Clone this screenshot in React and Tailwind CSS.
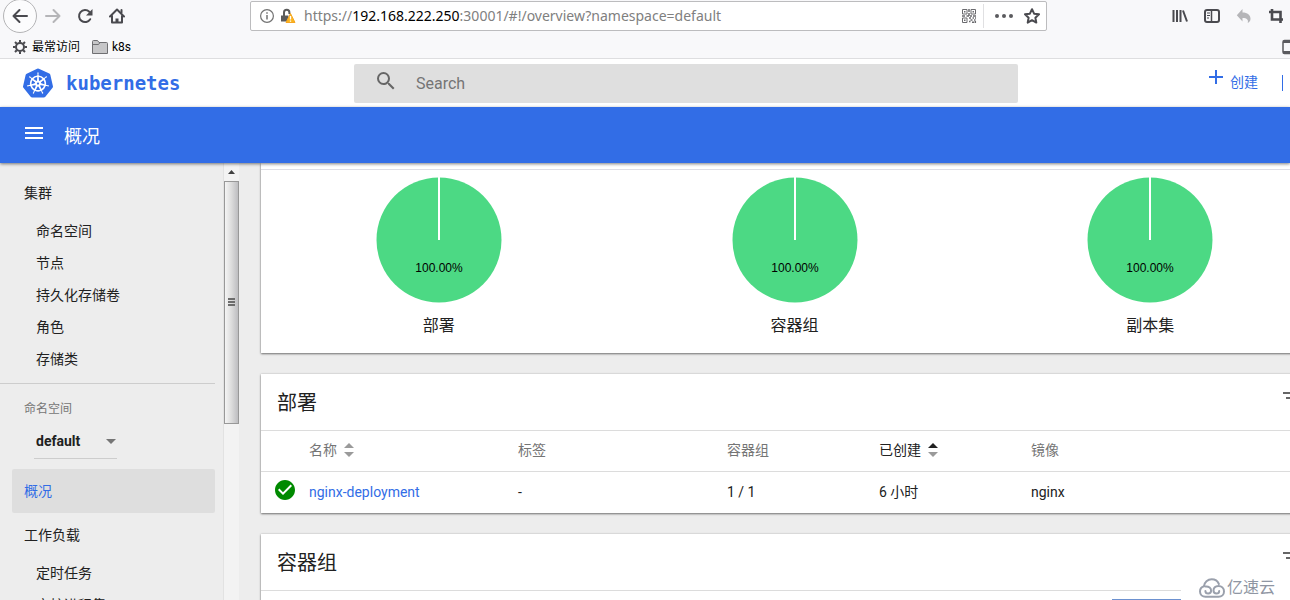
import React from 'react';
import { MdAdd, MdArrowDropDown, MdCheckCircle, MdFilterList, MdMenu, MdSearch } from 'react-icons/md';
import { SiKubernetes } from 'react-icons/si';

const clusterItems = ['命名空间', '节点', '持久化存储卷', '角色', '存储类'];
const workloadItems = ['定时任务', '守护进程集'];

const charts = [
  { label: '部署', value: '100.00%' },
  { label: '容器组', value: '100.00%' },
  { label: '副本集', value: '100.00%' },
];

const columns = [
  { title: '名称', width: 'w-[209px]', sortable: true },
  { title: '标签', width: 'w-[209px]' },
  { title: '容器组', width: 'w-[152px]' },
  { title: '已创建', width: 'w-[152px]', sortable: true, active: true },
  { title: '镜像', width: '' },
];

const deployments = [
  { name: 'nginx-deployment', labels: '-', pods: '1 / 1', age: '6 小时', image: 'nginx' },
];

const BackIcon = () => (
  <svg width="16" height="16" viewBox="0 0 16 16" fill="none" stroke="currentColor" strokeWidth="2" strokeLinecap="round" strokeLinejoin="round">
    <path d="M15 8H1.500M7.500 2L1.500 8l6 6" />
  </svg>
);

const ForwardIcon = () => (
  <svg width="16" height="16" viewBox="0 0 16 16" fill="none" stroke="currentColor" strokeWidth="2" strokeLinecap="round" strokeLinejoin="round">
    <path d="M1 8h13.500M8.500 2l6 6-6 6" />
  </svg>
);

const ReloadIcon = () => (
  <svg width="16" height="16" viewBox="0 0 16 16" fill="none">
    <path d="M13.200 11.200A6 6 0 1 1 12.300 3.800" stroke="currentColor" strokeWidth="2" strokeLinecap="round" />
    <path d="M15.500 1v6.500H9z" fill="currentColor" />
  </svg>
);

const HomeIcon = () => (
  <svg width="16" height="16" viewBox="0 0 16 16" fill="none" stroke="currentColor" strokeWidth="2" strokeLinecap="round" strokeLinejoin="round">
    <path d="M1 8.500L8 1.500l7 7" />
    <path d="M3 8v6.500h10V8" />
    <path d="M8 14v-3.500" strokeWidth="3" strokeLinecap="butt" />
    <path d="M12.500 2v2.500" />
  </svg>
);

const GearIcon = () => (
  <svg width="14" height="14" viewBox="0 0 14 14" fill="none" stroke="currentColor">
    <circle cx="7" cy="7" r="4" strokeWidth="2" />
    <path
      d="M7 0v2.500M7 11.500V14M0 7h2.500M11.500 7H14M2 2l1.800 1.800M10.200 10.200L12 12M2 12l1.800-1.800M10.200 3.800L12 2"
      strokeWidth="2"
    />
  </svg>
);

const FolderIcon = () => (
  <svg width="16" height="14" viewBox="0 0 16 14">
    <path d="M.5 13.500V1.500a1 1 0 0 1 1-1h4l1.500 2h7.500a1 1 0 0 1 1 1v10z" fill="#c6c6c8" stroke="#6f6f72" />
    <path d="M.5 4.500h6l1.500-2" fill="none" stroke="#6f6f72" />
  </svg>
);

const InfoIcon = () => (
  <svg width="14" height="14" viewBox="0 0 14 14" fill="none" stroke="#737373">
    <circle cx="7" cy="7" r="6.400" strokeWidth="1.200" />
    <path d="M7 6v4.500M7 3.200v1.500" strokeWidth="1.500" />
  </svg>
);

const InsecureIcon = () => (
  <svg width="16" height="16" viewBox="0 0 16 16">
    <path d="M4 8.500V4.500a2.700 2.700 0 0 1 5.400 0v1.500" fill="none" stroke="#5a5a5a" strokeWidth="2" />
    <path d="M1 7.500h7.500v6H1z" fill="#5a5a5a" />
    <path d="M10.500 5.500L15 14.500H6z" fill="#fbb41c" stroke="#f5a623" strokeWidth="1" strokeLinejoin="round" />
    <path d="M10.500 8v3.500M10.500 12.500v1.300" stroke="#fff" strokeWidth="1.300" />
  </svg>
);

const QrIcon = () => (
  <svg width="16" height="16" viewBox="0 0 16 16" fill="none" stroke="#6b6b6f">
    <path d="M1.500 1.500h4.500V6H1.500zM10 1.500h4.500V6H10zM1.500 10h4.500v4.500H1.500z" />
    <path d="M3 3.800h1.500M11.500 3.800H13M3 12.300h1.500M8 1v3M8 5v3M1 8h3M5.500 8H8M9 8h2M12 8h3" strokeWidth="1.500" />
    <path d="M8 10h2M11.500 10h1.500M14 10h1M9.500 12h2M13 12h1.500M8 13.500h1.500M11 14.300h2M14.300 13v2" strokeWidth="1.500" />
  </svg>
);

const StarIcon = () => (
  <svg width="16" height="16" viewBox="0 0 16 16" fill="none" stroke="currentColor" strokeWidth="2" strokeLinejoin="round">
    <path d="M8 1.200l2.100 4.500 4.900.6-3.600 3.400.9 4.900L8 12.200l-4.300 2.400.9-4.900L1 6.300l4.900-.6z" />
  </svg>
);

const LibraryIcon = () => (
  <svg width="16" height="16" viewBox="0 0 16 16" fill="none" stroke="currentColor" strokeWidth="2">
    <path d="M1.500 2v12M5 2v12M8.500 2v12M11 2.500L15 13.500" />
  </svg>
);

const SidebarIcon = () => (
  <svg width="16" height="16" viewBox="0 0 16 16" fill="none" stroke="currentColor">
    <rect x="1" y="2" width="14" height="12" rx="2" strokeWidth="2" />
    <path d="M7.500 2v12" strokeWidth="1.500" />
    <path d="M3 5h3M3 7.500h3M3 10h2" />
  </svg>
);

const UndoIcon = () => (
  <svg width="16" height="16" viewBox="0 0 16 16" fill="currentColor">
    <path d="M6.500 1v3.500c5 0 8 2.500 8 6.300 0 2-1 3.400-2.800 4.200 1-3-.6-5-5.200-5v3.500L.8 7.200z" />
  </svg>
);

const CropIcon = () => (
  <svg width="16" height="16" viewBox="0 0 16 16" fill="none" stroke="currentColor" strokeWidth="2.600">
    <path d="M4 1v10.500h11M1 4h11.500v11" />
  </svg>
);

const PhoneIcon = () => (
  <svg width="12" height="16" viewBox="0 0 12 16" fill="none" stroke="#5a5a5e">
    <rect x="1" y="1.500" width="10" height="13" rx="1.500" strokeWidth="1.500" />
    <path d="M1 3h10M1 13h10" strokeWidth="2" />
  </svg>
);

const SortIcon = ({ active }) => (
  <svg width="10" height="14" viewBox="0 0 10 14">
    <path d="M5 0l5 5H0z" fill={active ? '#212121' : '#9a9a9a'} />
    <path d="M5 14l5-5H0z" fill="#9a9a9a" />
  </svg>
);

const CloudIcon = () => (
  <svg width="26" height="20" viewBox="0 0 26 20" fill="none" stroke="#9aa0ac" strokeWidth="2" strokeLinecap="round">
    {/* outline of the cloud, then the two curls inside it */}
    <path d="M5 8.300C5.300 4.300 8.700 1.300 12.700 1.300c3.300 0 6 1.800 7.200 4.700" />
    <path d="M5 8.300C2.600 9 1 11 1 13.500c0 3 2.400 5.200 5.500 5.200h13c3.200 0 5.500-2.300 5.500-5.300 0-3.200-2.500-5.500-5.500-5.500-3.300 0-5 2.200-5 4.600 0 1.800 1.400 3 3 3s2.700-1.100 2.700-2.500" />
    <path d="M6.500 8.500c3.600-.3 5.600 1.800 5.600 4 0 1.800-1.300 3-2.900 3s-2.800-1.100-2.800-2.500" />
  </svg>
);

const BrowserChrome = () => (
  <header className="shrink-0 border-b border-[#dedee0] bg-[#f8f8fa] text-[#4a4a4f]">
    <div className="flex h-8 items-center">
      <div className="flex w-[250px] shrink-0 items-center">
        <button aria-label="后退" className="ml-[3px] flex size-[34px] shrink-0 items-center justify-center rounded-full border border-[#b4b4b6] bg-[#fcfcfd]">
          <BackIcon />
        </button>
        <button aria-label="前进" className="ml-2 text-[#b5b5b8]"><ForwardIcon /></button>
        <button aria-label="刷新" className="ml-4"><ReloadIcon /></button>
        <button aria-label="主页" className="ml-4"><HomeIcon /></button>
      </div>
      <div className="flex h-[30px] min-w-0 flex-1 items-center rounded-xs border border-[#bcbcbe] bg-white pr-1.5 pl-[9px]">
        <InfoIcon />
        <span className="ml-1.5"><InsecureIcon /></span>
        <div
          role="textbox"
          aria-label="网址"
          contentEditable
          suppressContentEditableWarning
          className="ml-2 min-w-0 flex-1 truncate font-['Noto_Sans',sans-serif] text-sm text-[#808080] outline-none"
        >
          https://<span className="text-black">192.168.222.250</span>:30001/#!/overview?namespace=default
        </div>
        <button aria-label="二维码"><QrIcon /></button>
        <span className="mx-1.5 h-6 w-px bg-[#e0e0e2]" />
        <button aria-label="页面操作" className="ml-1 flex w-5 items-center justify-center gap-[3px]">
          <i className="size-1 rounded-full bg-[#5a5a5e]" />
          <i className="size-1 rounded-full bg-[#5a5a5e]" />
          <i className="size-1 rounded-full bg-[#5a5a5e]" />
        </button>
        <button aria-label="收藏" className="ml-2.5"><StarIcon /></button>
      </div>
      <div className="flex w-[243px] shrink-0 items-center justify-end gap-4 pr-1.5">
        <button aria-label="书库"><LibraryIcon /></button>
        <button aria-label="侧栏"><SidebarIcon /></button>
        <button aria-label="撤销" className="text-[#b5b5b8]"><UndoIcon /></button>
        <button aria-label="截图"><CropIcon /></button>
      </div>
    </div>
    <div className="flex h-[26px] items-center overflow-hidden pt-[3px] pl-[13px] text-xs text-black">
      <button className="flex items-center gap-[5px]"><span className="text-[#4a4a4f]"><GearIcon /></span>最常访问</button>
      <button className="ml-3 flex items-center gap-1"><FolderIcon />k8s</button>
      <button aria-label="移动设备" className="-mr-1 ml-auto"><PhoneIcon /></button>
    </div>
  </header>
);

const AppHeader = () => (
  <div className="flex h-12 shrink-0 items-center bg-white">
    <a href="#overview" className="flex w-[354px] shrink-0 items-center gap-[13px] pl-[23px] text-[#326de6]">
      <SiKubernetes size={30} />
      <span className="font-['DejaVu_Sans_Mono',monospace] text-[19px] font-bold">kubernetes</span>
    </a>
    <label className="flex h-[39px] flex-1 items-center rounded-xs bg-[#dfdfdf] pl-5">
      <MdSearch size={24} className="mb-1 text-[#666]" />
      <input aria-label="Search" placeholder="Search" className="ml-[18px] flex-1 pt-0.5 text-base outline-none placeholder:text-[#757575]" />
    </label>
    <div className="flex w-[272px] shrink-0 items-center justify-end text-[#326de6]">
      <button className="flex items-center gap-0.5 pb-0.5 text-sm">
        <MdAdd size={24} className="mb-2.5" />
        创建
      </button>
      <span className="mr-[7px] ml-6 h-4 w-px bg-[#326de6]" />
    </div>
  </div>
);

const NavSection = ({ title, items }) => (
  <>
    <a href="#section" className="ml-3 flex h-11 items-center pl-3">{title}</a>
    {items.map((item) => (
      <a key={item} href="#item" className="ml-6 flex h-8 items-center pl-3">{item}</a>
    ))}
  </>
);

const Scrollbar = () => (
  <div className="flex w-[15px] shrink-0 flex-col bg-[#f3f3f3]">
    <div className="flex h-[18px] items-center justify-center">
      <svg width="7" height="4" viewBox="0 0 7 4"><path d="M3.500 0L7 4H0z" fill="#404040" /></svg>
    </div>
    <div className="flex h-[243px] flex-col items-center justify-center gap-px border border-[#989898] bg-linear-to-r from-[#f4f4f4] via-[#dcdcdc] to-[#bdbdc0] pb-0.5">
      <i className="h-0.5 w-[7px] bg-[#6c6c6c]" />
      <i className="h-0.5 w-[7px] bg-[#6c6c6c]" />
      <i className="h-0.5 w-[7px] bg-[#6c6c6c]" />
    </div>
  </div>
);

const Sidebar = () => (
  <nav className="w-[224px] shrink-0 overflow-hidden border-r border-[#e2e2e2] pt-2 pr-2 text-sm">
    <NavSection title="集群" items={clusterItems} />
    <div className="mt-2 border-t border-[#cdcdcd] pt-[13px]">
      <label htmlFor="namespace" className="block pl-6 text-xs leading-6 text-[#757575]">命名空间</label>
      <div className="relative mt-[3px] mb-2.5 ml-[34px] flex h-[35px] w-[83px] items-center border-b border-[#cdcdcd]">
        <select id="namespace" className="w-full appearance-none pl-0.5 text-sm font-bold outline-none">
          <option>default</option>
        </select>
        <MdArrowDropDown size={24} className="pointer-events-none absolute -right-1.5 text-[#757575]" />
      </div>
    </div>
    <a href="#overview" className="ml-3 flex h-11 items-center rounded-xs bg-[#dedede] pl-3 text-[#326de6]">概况</a>
    <NavSection title="工作负载" items={workloadItems} />
  </nav>
);

const Pie = ({ label, value }) => (
  <div className="flex flex-1 flex-col items-center">
    <svg width="126" height="126" viewBox="0 0 126 126">
      <circle cx="63" cy="63" r="62.500" fill="#4cd984" />
      <path d="M63 63V0" stroke="#fff" strokeWidth="2" />
      <text x="63" y="95" textAnchor="middle" fontSize="12" fontFamily="Liberation Sans, sans-serif">{value}</text>
    </svg>
    <span className="mt-[11px] text-base">{label}</span>
  </div>
);

const Card = ({ title, children }) => (
  <section className="mb-[21px] bg-white shadow-[0_1px_2px_rgba(0,0,0,0.5),0_0_2px_rgba(0,0,0,0.15)]">
    {title && (
      <div className="flex h-14 items-center justify-between pr-6 pl-4">
        <h2 className="pt-0.5 text-xl">{title}</h2>
        <button aria-label="筛选" className="mb-2 text-[#666]"><MdFilterList size={24} /></button>
      </div>
    )}
    {children}
  </section>
);

const DeploymentTable = () => (
  <table className="w-full table-fixed border-t border-[#dcdcdc] text-left text-sm">
    <thead>
      <tr className="h-[41px] border-b border-[#dcdcdc]">
        <th className="w-12" aria-label="状态" />
        {columns.map((col) => (
          <th key={col.title} className={`${col.width} pb-[3px] font-normal ${col.active ? 'text-[#212121]' : 'text-[#757575]'}`}>
            <span className="flex items-center gap-[7px]">
              {col.title}
              {col.sortable && <SortIcon active={col.active} />}
            </span>
          </th>
        ))}
      </tr>
    </thead>
    <tbody>
      {deployments.map((row) => (
        <tr key={row.name} className="h-[41px]">
          <td className="pb-1 pl-3"><MdCheckCircle size={24} className="text-[#008a00]" /></td>
          <td><a href="#deployment" className="text-[#326de6]">{row.name}</a></td>
          <td>{row.labels}</td>
          <td>{row.pods}</td>
          <td>{row.age}</td>
          <td>{row.image}</td>
        </tr>
      ))}
    </tbody>
  </table>
);

const App = () => (
  <div className="relative flex h-screen flex-col overflow-hidden bg-[#ededed] font-['Roboto','Noto_Sans_CJK_SC',sans-serif] text-[#212121]">
    <BrowserChrome />
    <AppHeader />
    <div className="z-10 flex h-14 shrink-0 items-center bg-[#326de6] pl-[22px] text-white shadow-[0_1px_3px_rgba(0,0,0,0.5)]">
      <button aria-label="菜单" className="mb-1"><MdMenu size={24} /></button>
      <h1 className="ml-[18px] pt-1 text-lg">概况</h1>
    </div>
    <div className="flex min-h-0 flex-1">
      <Sidebar />
      <Scrollbar />
      <main className="min-w-0 flex-1 overflow-hidden pl-[22px]">
        {/* cards run past the right edge of the window */}
        <div className="-mr-[38px]">
          <Card>
            <div className="h-[7px] border-b border-[#dedee6]" />
            <div className="flex pt-[7px] pb-[15px]">
              {charts.map((chart) => <Pie key={chart.label} {...chart} />)}
            </div>
          </Card>
          <Card title="部署">
            <DeploymentTable />
          </Card>
          <Card title="容器组">
            <div className="h-20 border-t border-[#dcdcdc] pt-2">
              <div className="ml-[851px] h-1 w-[160px] bg-[#6d92d0]" />
            </div>
          </Card>
        </div>
      </main>
    </div>
    <div className="absolute right-0 bottom-0 z-20 flex h-6 w-[109px] items-center gap-0.5 bg-white pl-[18px] text-base text-[#8f96a3]">
      <CloudIcon />
      亿速云
    </div>
  </div>
);

export default App;
